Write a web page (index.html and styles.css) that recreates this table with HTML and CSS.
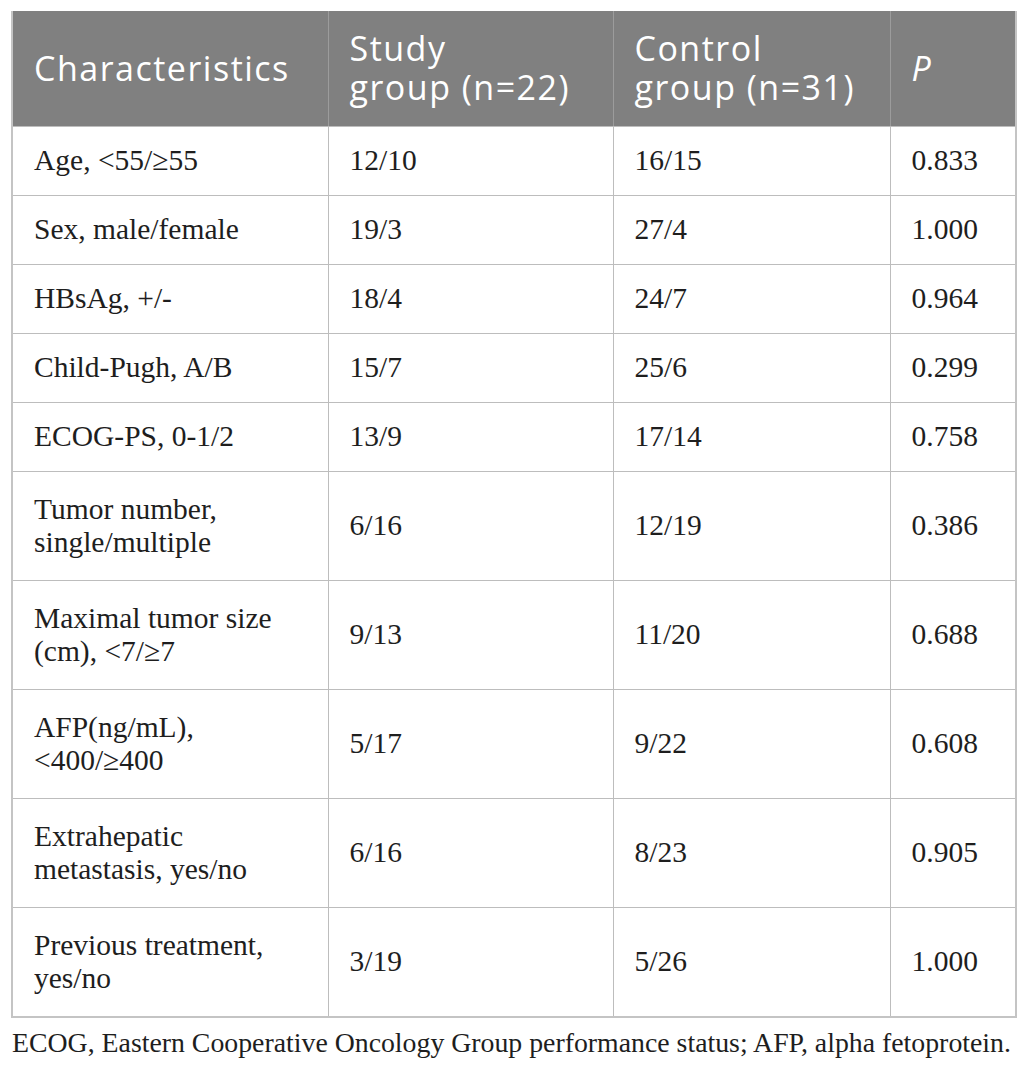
FILE: index.html
```html
<!DOCTYPE html>
<html lang="en">
<head>
<meta charset="utf-8">
<title>Table</title>
<link rel="stylesheet" href="styles.css">
</head>
<body>
<div class="wrap">
  <table class="data">
    <colgroup>
      <col class="c1"><col class="c2"><col class="c3"><col class="c4">
    </colgroup>
    <thead>
      <tr>
        <th>Characteristics</th>
        <th>Study<br>group (n=22)</th>
        <th>Control<br>group (n=31)</th>
        <th><i>P</i></th>
      </tr>
    </thead>
    <tbody>
      <tr class="one"><td>Age, &lt;55/≥55</td><td>12/10</td><td>16/15</td><td>0.833</td></tr>
      <tr class="one"><td>Sex, male/female</td><td>19/3</td><td>27/4</td><td>1.000</td></tr>
      <tr class="one"><td>HBsAg, +/-</td><td>18/4</td><td>24/7</td><td>0.964</td></tr>
      <tr class="one"><td>Child-Pugh, A/B</td><td>15/7</td><td>25/6</td><td>0.299</td></tr>
      <tr class="one"><td>ECOG-PS, 0-1/2</td><td>13/9</td><td>17/14</td><td>0.758</td></tr>
      <tr class="two"><td>Tumor number,<br>single/multiple</td><td>6/16</td><td>12/19</td><td>0.386</td></tr>
      <tr class="two"><td>Maximal tumor size<br>(cm), &lt;7/≥7</td><td>9/13</td><td>11/20</td><td>0.688</td></tr>
      <tr class="two"><td>AFP(ng/mL),<br>&lt;400/≥400</td><td>5/17</td><td>9/22</td><td>0.608</td></tr>
      <tr class="two"><td>Extrahepatic<br>metastasis, yes/no</td><td>6/16</td><td>8/23</td><td>0.905</td></tr>
      <tr class="two"><td>Previous treatment,<br>yes/no</td><td>3/19</td><td>5/26</td><td>1.000</td></tr>
    </tbody>
  </table>
  <p class="note">ECOG, Eastern Cooperative Oncology Group performance status; AFP, alpha fetoprotein.</p>
</div>
</body>
</html>
```
FILE: styles.css
```css
html, body {
  margin: 0;
  padding: 0;
  background: #ffffff;
}

.wrap {
  padding: 11px 11px 0 11px;
}

.data {
  width: 1004px;
  border-collapse: collapse;
  table-layout: fixed;
  border: 2px solid #c4c4c4;
  border-top: none;
}

.c1 { width: 316px; }
.c2 { width: 285px; }
.c3 { width: 277px; }
.c4 { width: 126px; }

.data th {
  background: #808080;
  color: #ffffff;
  font-family: "Open Sans", "DejaVu Sans", sans-serif;
  font-weight: 400;
  font-size: 34px;
  letter-spacing: 1.5px;
  line-height: 39px;
  text-align: left;
  vertical-align: middle;
  height: 115px;
  padding: 0 4px 0 21px;
  box-sizing: border-box;
  border-left: 1px solid #9c9c9c;
  border-bottom: 1px solid #bdbdbd;
  white-space: nowrap;
}

.data th:first-child {
  border-left: none;
}

.data th i {
  font-style: italic;
}

.data td {
  font-family: "Liberation Serif", "Times New Roman", serif;
  font-size: 29.5px;
  line-height: 33px;
  color: #1e1e1e;
  vertical-align: middle;
  padding: 0 6px 0 21px;
  border: 1px solid #bdbdbd;
  white-space: nowrap;
}

.data tr.one td {
  height: 68px;
}

.data tr.two td {
  height: 108px;
}

.note {
  margin: 8px 0 0 1px;
  font-family: "Liberation Serif", "Times New Roman", serif;
  font-size: 27.8px;
  line-height: 34px;
  color: #1e1e1e;
  white-space: nowrap;
}
```
